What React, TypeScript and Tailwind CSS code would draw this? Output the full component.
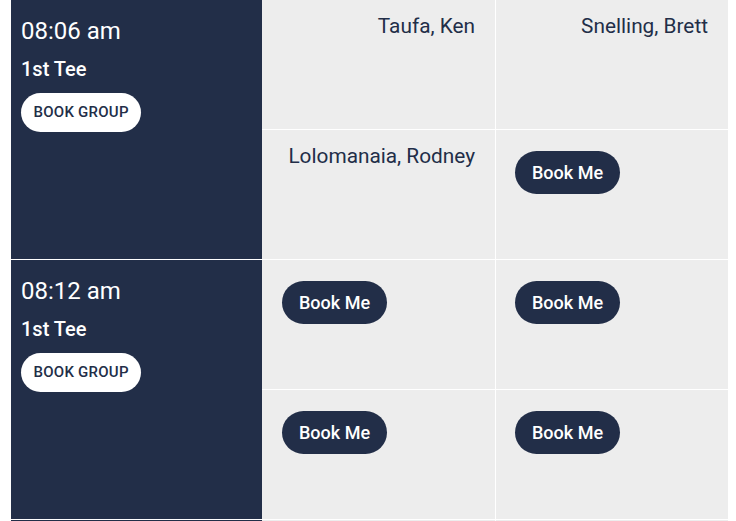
import React from "react";

type Cell = { name?: string };

const blocks: { time: string; cells: Cell[] }[] = [
  { time: "08:06 am", cells: [{ name: "Taufa, Ken" }, { name: "Snelling, Brett" }, { name: "Lolomanaia, Rodney" }, {}] },
  { time: "08:12 am", cells: [{}, {}, {}, {}] },
];

function CellView({ cell, idx }: { cell: Cell; idx: number }) {
  const cls =
    (idx < 2 ? "h-[130px] border-b border-white " : "h-[129px] ") +
    (idx % 2 === 0 ? "border-r border-white " : "") +
    "bg-[#ededed]";
  return (
    <div className={cls}>
      {cell.name ? (
        <div className="pt-[12px] pr-[20px] text-right text-[20.8px] leading-[28px] text-[#222e48]">{cell.name}</div>
      ) : (
        <div className={(idx % 2 === 0 ? "pl-[20px]" : "pl-[19px]") + " pt-[21px]"}>
          <button className="h-[43px] rounded-full bg-[#222e48] px-[17px] text-[18px] font-medium text-white">
            Book Me
          </button>
        </div>
      )}
    </div>
  );
}

export default function App() {
  return (
    <div className="ml-[11px] mr-[8px] bg-white" style={{ fontFamily: "Roboto, 'Noto Sans', sans-serif" }}>
      {blocks.map((b, i) => (
        <div key={i} className="flex border-b border-white">
          <div className="w-[251px] shrink-0 bg-[#222e48] pl-[10px] pt-[15px]">
            <div className="text-[24px] leading-[32px] text-white">{b.time}</div>
            <div className="mt-[8px] text-[20px] font-medium leading-[28px] text-white">1st Tee</div>
            <button className="mt-[10px] h-[39px] rounded-full bg-white px-[12.5px] text-[15px] font-medium uppercase tracking-[0.25px] text-[#222e48]">
              Book Group
            </button>
          </div>
          <div className="grid flex-1 grid-cols-[234px_1fr]">
            {b.cells.map((c, j) => (
              <CellView key={j} cell={c} idx={j} />
            ))}
          </div>
        </div>
      ))}
      <div className="flex h-[2px]">
        <div className="w-[251px] shrink-0 bg-[#222e48]" />
        <div className="grid flex-1 grid-cols-[234px_1fr]">
          <div className="border-r border-white bg-[#ededed]" />
          <div className="bg-[#ededed]" />
        </div>
      </div>
    </div>
  );
}
